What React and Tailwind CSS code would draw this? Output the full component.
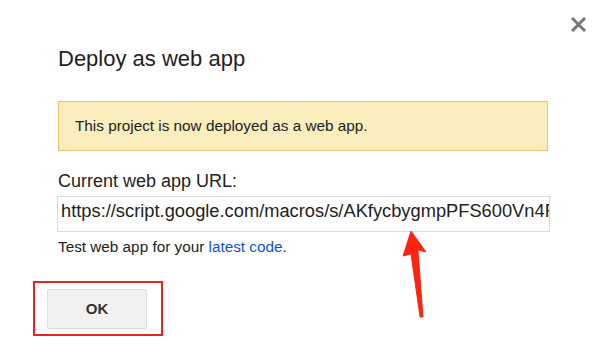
export default function App() {
  const url = 'https://script.google.com/macros/s/AKfycbygmpPFS600Vn4R0pKx2e7qZ1xbmPlrTgVdHw/exec';

  return (
    <div className="relative w-[606px] h-[357px] overflow-hidden bg-white text-[#222] font-['Liberation_Sans',Arial,sans-serif]">
      <button className="absolute left-[571px] top-[17px] w-[15px] h-[15px] flex items-center justify-center" aria-label="Close">
        <svg width="15" height="15" viewBox="0 0 15 15">
          <path d="M2 2 L13 13 M13 2 L2 13" stroke="#777" strokeWidth="3" strokeLinecap="square" />
        </svg>
      </button>

      <div className="pl-[58px] pt-[46px]">
        <h1 className="text-[22px] leading-[26px] font-normal">Deploy as web app</h1>

        <div className="mt-[29px] w-[490px] h-[50px] flex items-center px-4 bg-[#f9edbe] border border-[#f0c36d]">
          <span className="text-[15.3px] leading-[18px]">This project is now deployed as a web app.</span>
        </div>

        <div className="mt-[19px] text-[18px] leading-[22px]">Current web app URL:</div>

        <input
          readOnly
          value={url}
          className="mt-[4px] -ml-px block w-[493px] h-[36px] pl-[3px] pr-0 pb-[6px] text-[18.3px] text-[#222] bg-white border border-[#d9d9d9] outline-none font-['Liberation_Sans',Arial,sans-serif]"
        />

        <p className="mt-[6px] text-[15.3px] leading-[18px]">
          Test web app for your <a href="#" className="text-[#15c]">latest code</a>.
        </p>

        <div className="mt-[25px] -ml-[25px] w-[130px] h-[55px] border-2 border-[#e3261f] pl-[12px] pt-[6px]">
          <button className="w-[100px] h-[40px] rounded-[2px] border border-[#dcdcdc] bg-[#f1f1f1] text-[15px] font-bold text-[#333]">
            OK
          </button>
        </div>
      </div>

      <svg className="absolute left-0 top-0 pointer-events-none" width="606" height="357" viewBox="0 0 606 357">
        <polygon
          points="411,231 426,252 418,250 423,317 420,317 411,254 403,256"
          fill="#ff2410"
          stroke="#e81c0c"
          strokeWidth="0.8"
          strokeLinejoin="round"
        />
      </svg>
    </div>
  );
}
